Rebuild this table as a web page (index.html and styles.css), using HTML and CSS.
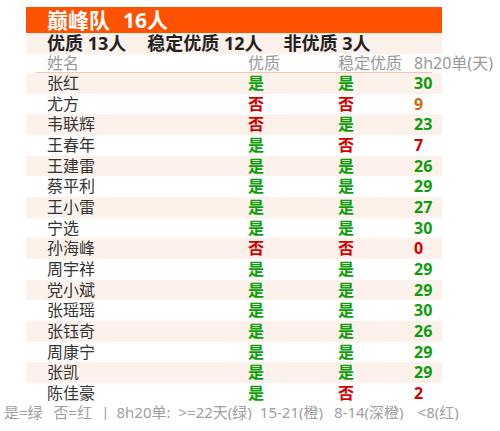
FILE: index.html
```html
<!DOCTYPE html>
<html>
  <head>
    <meta charset="utf-8">
    <title>巅峰队</title>
    <link rel="stylesheet" href="styles.css">
  </head>
  <body>
    <div class="board">
      <div class="title">巅峰队<span class="count">16人</span></div>
      <div class="summary">
        <span>优质 13人</span>
        <span>稳定优质 12人</span>
        <span>非优质 3人</span>
      </div>
      <div class="row head">
        <div>姓名</div>
        <div>优质</div>
        <div>稳定优质</div>
        <div>8h20单(天)</div>
      </div>
      <div id="rows"></div>
    </div>
    <div class="legend">
      <span>是=绿</span>
      <span class="m11">否=红</span>
      <span class="sep">|</span>
      <span class="m7">8h20单:</span>
      <span class="m8">&gt;=22天(绿)</span>
      <span class="m8">15-21(橙)</span>
      <span class="m11">8-14(深橙)</span>
      <span class="m14">&lt;8(红)</span>
    </div>

    <script>
      const people = [
        ["张红", 1, 1, 30],
        ["尤方", 0, 0, 9],
        ["韦联辉", 0, 1, 23],
        ["王春年", 1, 0, 7],
        ["王建雷", 1, 1, 26],
        ["蔡平利", 1, 1, 29],
        ["王小雷", 1, 1, 27],
        ["宁选", 1, 1, 30],
        ["孙海峰", 0, 0, 0],
        ["周宇祥", 1, 1, 29],
        ["党小斌", 1, 1, 29],
        ["张瑶瑶", 1, 1, 30],
        ["张钰奇", 1, 1, 26],
        ["周康宁", 1, 1, 29],
        ["张凯", 1, 1, 29],
        ["陈佳豪", 1, 0, 2]
      ];

      function yesNo(v) {
        return v ? '<div class="yes">是</div>' : '<div class="no">否</div>';
      }

      function dayClass(d) {
        if (d >= 22) return "yes";
        if (d >= 15) return "mid";
        if (d >= 8) return "low";
        return "no";
      }

      let html = "";
      people.forEach(function (p) {
        html += '<div class="row">' +
          '<div class="name">' + p[0] + '</div>' +
          yesNo(p[1]) + yesNo(p[2]) +
          '<div class="' + dayClass(p[3]) + '">' + p[3] + '</div>' +
          '</div>';
      });
      document.getElementById("rows").innerHTML = html;
    </script>
  </body>
</html>
```

FILE: styles.css
```css
body {
  margin: 0;
  font-family: "Noto Sans", "Noto Sans CJK SC", sans-serif;
  background: #fff;
}

.board {
  width: 416px;
  margin: 7px 0 0 26px;
}

.title {
  height: 26px;
  line-height: 26px;
  padding-left: 21px;
  background-color: #ff5200;
  color: #fff;
  font-size: 21px;
  font-weight: bold;
}
.title .count {
  margin-left: 13px;
}

.summary {
  height: 21px;
  line-height: 21px;
  padding-left: 21px;
  background-color: #fdf1eb;
  color: #222;
  font-size: 18px;
  font-weight: bold;
  display: flex;
  gap: 21px;
}

.row {
  display: grid;
  grid-template-columns: 201px 90px 76px 1fr;
  padding-left: 21px;
  height: 20.66px;
  line-height: 20.66px;
  font-size: 16px;
  white-space: nowrap;
}

.row.head {
  height: 18px;
  line-height: 18px;
  margin: 0 10px;
  padding-left: 11px;
  border-bottom: 1px solid #f9c4ad;
  color: #999;
}

#rows .row:nth-child(odd) {
  background-color: #fdf1ec;
}

.name {
  color: #333;
}

.yes, .no, .mid, .low {
  font-weight: bold;
}

.yes {
  color: #0a9e0a;
}
.no {
  color: #d40000;
}
.mid {
  color: #f08c00;
}
.low {
  color: #cf6a10;
}

/* legend under the table */
.legend {
  display: flex;
  margin: 1px 0 0 4px;
  font-size: 15px;
  line-height: 15px;
  color: #a0a0a0;
  white-space: nowrap;
}
.legend .sep {
  margin-left: 9px;
}
.m7 {
  margin-left: 7px;
}
.m8 {
  margin-left: 8px;
}
.m11 {
  margin-left: 11px;
}
.m14 {
  margin-left: 14px;
}
```
